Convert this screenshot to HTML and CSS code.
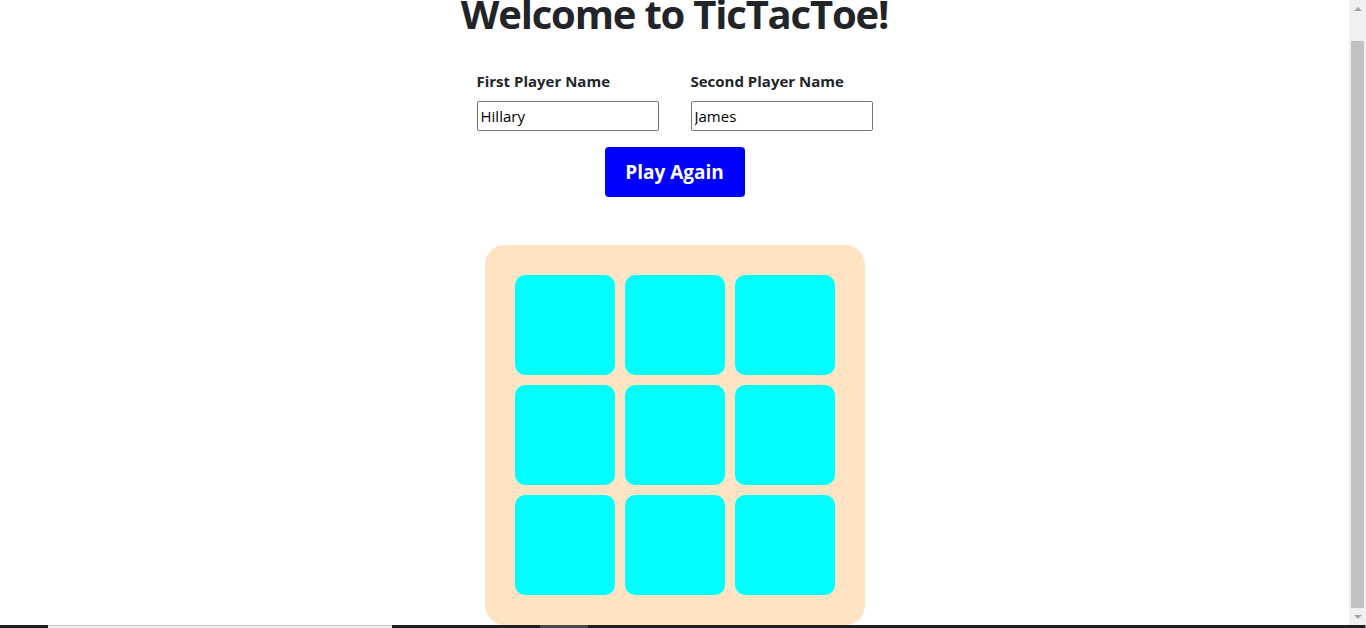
FILE: index.html
```html
<!DOCTYPE html>
<html lang="en">
<head>
<meta charset="utf-8">
<title>TicTacToe</title>
<link rel="stylesheet" href="styles.css">
</head>
<body>
<div class="screen">
  <div class="viewport">
    <main class="page">
      <h1 class="title">Welcome to TicTacToe!</h1>
      <form class="players">
        <div class="field">
          <label class="field-label" for="p1">First Player Name</label>
          <input class="field-input" id="p1" type="text" value="Hillary">
        </div>
        <div class="field">
          <label class="field-label" for="p2">Second Player Name</label>
          <input class="field-input" id="p2" type="text" value="James">
        </div>
      </form>
      <button class="play" type="button">Play Again</button>
      <div class="board">
        <div class="cell"></div><div class="cell"></div><div class="cell"></div>
        <div class="cell"></div><div class="cell"></div><div class="cell"></div>
        <div class="cell"></div><div class="cell"></div><div class="cell"></div>
      </div>
    </main>
    <div class="scrollbar">
      <span class="arrow arrow-up"></span>
      <div class="track"><div class="thumb"></div></div>
      <span class="arrow arrow-down"></span>
    </div>
  </div>
  <div class="taskbar">
    <span class="tb-gap tb-gap-a"></span>
    <span class="tb-light"></span>
    <span class="tb-gap tb-gap-b"></span>
    <span class="tb-mid"></span>
    <span class="tb-gap tb-gap-c"></span>
    <span class="tb-end"></span>
  </div>
</div>
</body>
</html>
```

FILE: styles.css
```css
html, body {
  margin: 0;
  padding: 0;
  height: 100%;
  overflow: hidden;
  background: #fff;
}

.screen {
  display: flex;
  flex-direction: column;
  width: 1366px;
  height: 628px;
}

.viewport {
  display: flex;
  flex: 1;
  min-height: 0;
}

.page {
  flex: 1;
  display: flex;
  flex-direction: column;
  align-items: center;
  font-family: "Open Sans", "Noto Sans", sans-serif;
  color: #212529;
  overflow: hidden;
}

.title {
  font-size: 40px;
  font-weight: 700;
  line-height: 48px;
  letter-spacing: -1.2px;
  margin: -10px 0 31px;
  white-space: nowrap;
}

.players {
  display: flex;
  gap: 32px;
  margin: 0;
}

.field {
  display: flex;
  flex-direction: column;
  width: 182px;
}

.field-label {
  font-size: 15px;
  font-weight: 700;
  line-height: 24px;
  margin-bottom: 8px;
}

.field-input {
  box-sizing: border-box;
  width: 182px;
  height: 30px;
  border: 1px solid #767676;
  border-radius: 2px;
  padding: 1px 3px;
  font-family: "Open Sans", "Noto Sans", sans-serif;
  font-size: 15px;
  color: #000;
  background: #fff;
}

.play {
  margin-top: 16px;
  width: 140px;
  height: 50px;
  border: none;
  border-radius: 4px;
  background: #0000ff;
  color: #fff;
  font-family: "Open Sans", "Noto Sans", sans-serif;
  font-size: 19px;
  font-weight: 700;
  padding: 0;
}

.board {
  margin-top: 48px;
  box-sizing: border-box;
  width: 380px;
  height: 380px;
  flex-shrink: 0;
  padding: 30px;
  border-radius: 20px;
  background: #ffe4c4;
  display: grid;
  grid-template-columns: repeat(3, 100px);
  grid-template-rows: repeat(3, 100px);
  gap: 10px;
}

.cell {
  background: #00ffff;
  border-radius: 10px;
}

/* fake window scrollbar */
.scrollbar {
  width: 17px;
  background: #f0f0f0;
  display: flex;
  flex-direction: column;
  align-items: center;
}

.arrow {
  width: 0;
  height: 0;
  border-left: 4px solid transparent;
  border-right: 4px solid transparent;
}

.arrow-up {
  margin: 7px 0 6px;
  border-bottom: 4px solid #a3a3a3;
}

.arrow-down {
  margin: 6px 0 6px;
  border-top: 4px solid #a3a3a3;
}

.track {
  flex: 1;
  align-self: stretch;
  display: flex;
  flex-direction: column;
  padding: 24px 2px 1px;
}

.thumb {
  flex: 1;
  background: #c1c1c1;
}

/* bottom strip */
.taskbar {
  height: 3px;
  display: flex;
  background: #1f1f1f;
}

.tb-gap-a { width: 48px; }
.tb-light {
  width: 344px;
  background: #f2f2f2;
  border-top: 1px solid #c8c8c8;
  box-sizing: border-box;
}
.tb-gap-b { width: 148px; }
.tb-mid { width: 48px; background: #4a4a4a; }
.tb-gap-c { flex: 1; }
.tb-end { width: 1px; background: #8a8a8a; }
```
